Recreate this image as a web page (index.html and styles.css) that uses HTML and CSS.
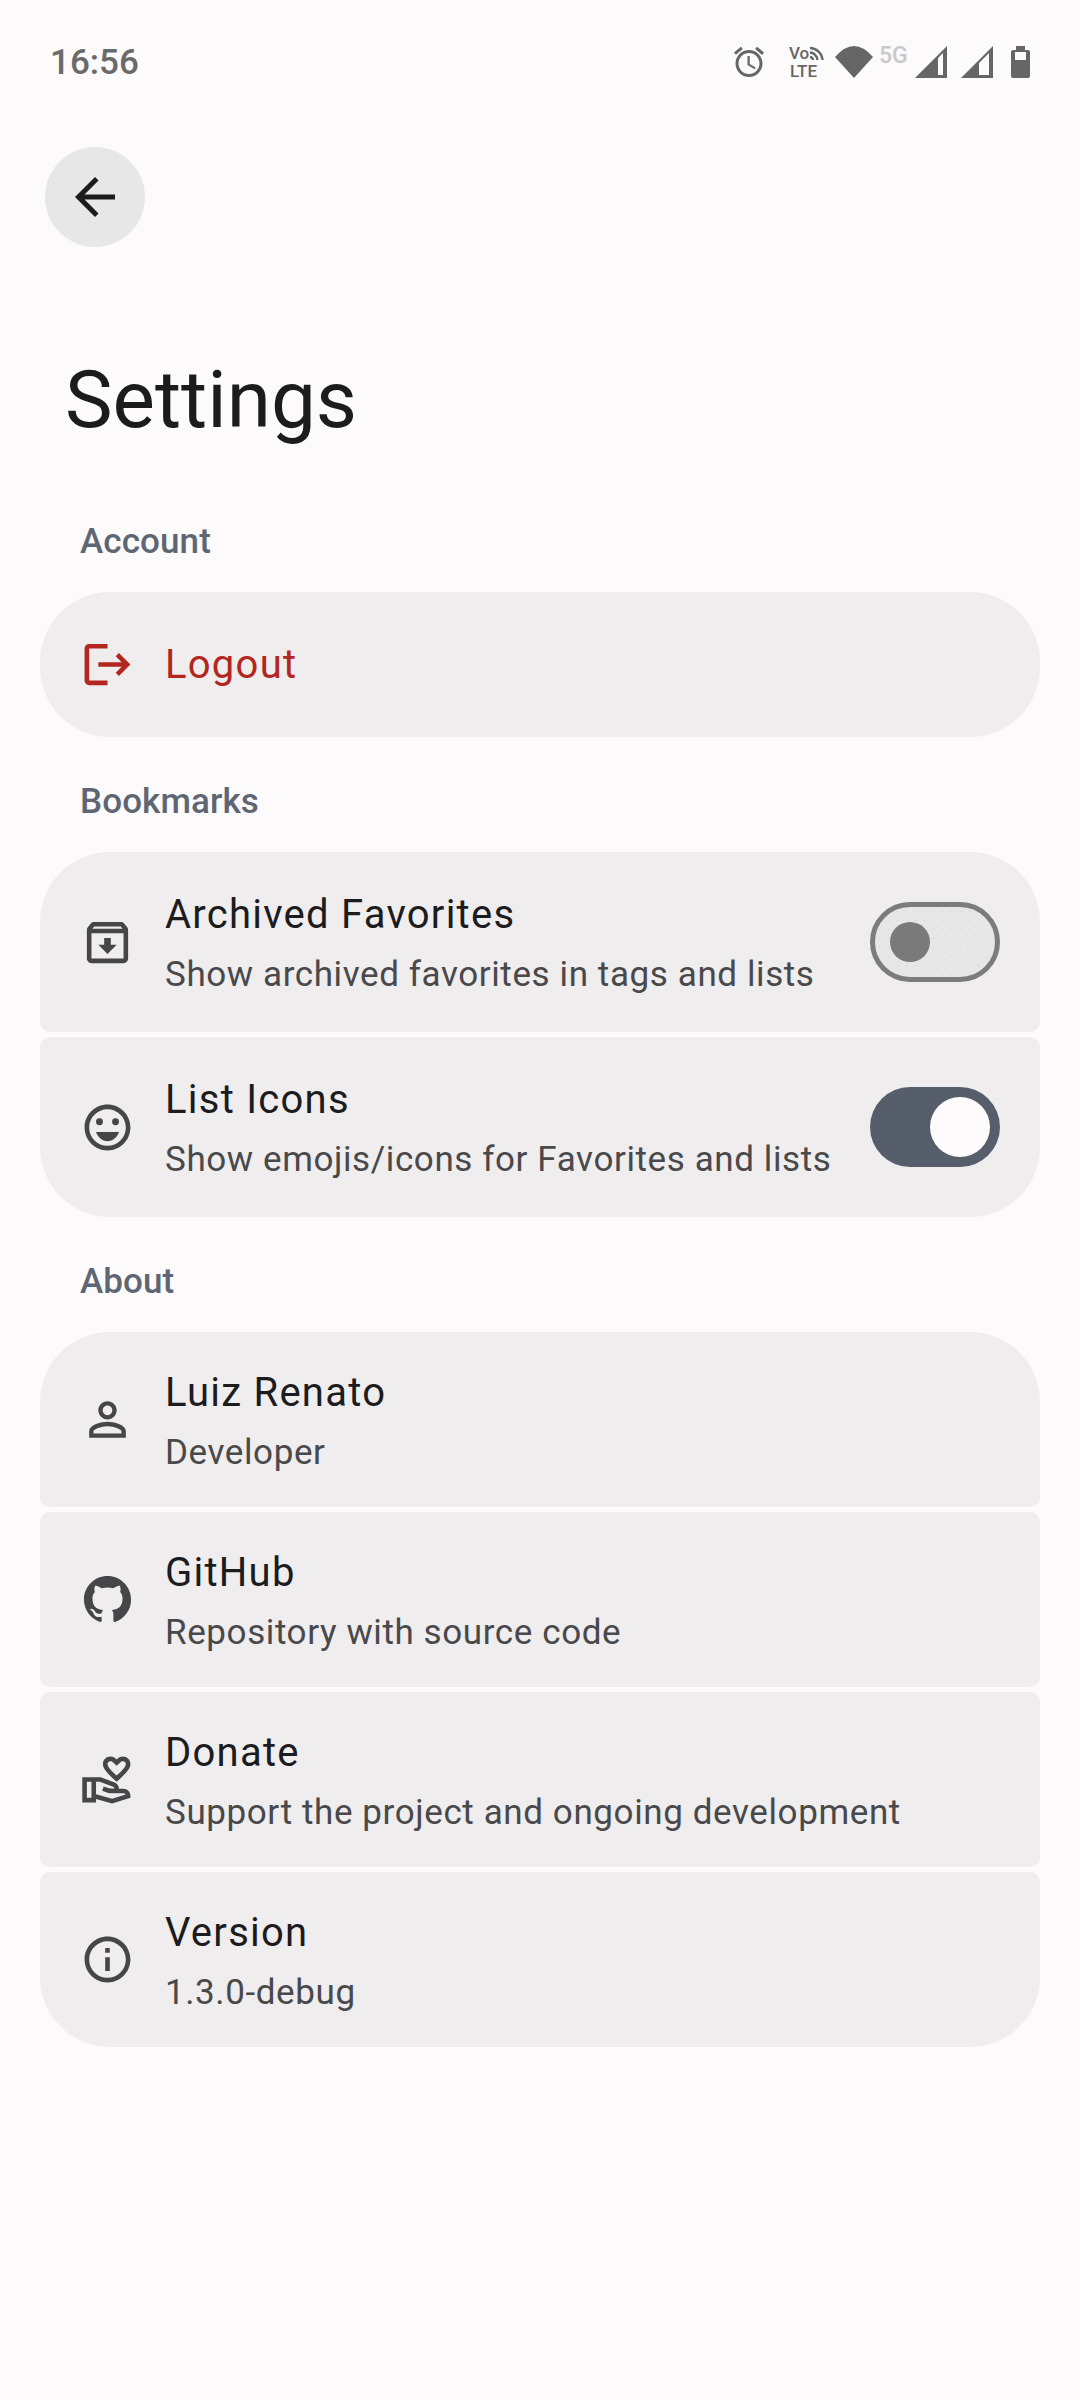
FILE: index.html
```html
<!DOCTYPE html>
<html lang="en">
<head>
  <meta charset="UTF-8">
  <meta name="viewport" content="width=device-width, initial-scale=1.0">
  <title>Settings</title>
  <link rel="stylesheet" href="styles.css">
</head>
<body>
  <header class="status-bar">
    <span class="time">16:56</span>
    <div class="status-icons">
      <svg class="st-alarm" viewBox="0 0 24 24"><path d="M22 5.72l-4.6-3.86-1.29 1.53 4.6 3.86L22 5.72zM7.88 3.39L6.6 1.86 2 5.71l1.29 1.53 4.59-3.85zM12.5 8H11v6l4.75 2.85.75-1.23-4-2.37V8zM12 4c-4.97 0-9 4.03-9 9s4.03 9 9 9 9-4.03 9-9-4.03-9-9-9zm0 16c-3.87 0-7-3.13-7-7s3.13-7 7-7 7 3.13 7 7-3.13 7-7 7z"/></svg>
      <svg class="st-volte" viewBox="0 0 34 32">
        <text x="0" y="13" class="volte-text">Vo</text>
        <text x="1" y="31" class="volte-text">LTE</text>
        <path d="M21 2c6 0 12 5 12.500 12M21 6.500c3.500 0 7 3 7.500 7.500M21 11c1.500 0 3 1.300 3 3" class="volte-arcs"/>
      </svg>
      <svg class="st-wifi" viewBox="0 0 38 32"><path d="M19 32L0 11Q19-11 38 11Z"/></svg>
      <span class="st-5g">5G</span>
      <svg class="st-signal" viewBox="0 0 32 32"><path fill-rule="evenodd" d="M0 32L32 0V32ZM23 29H28V7L23 12Z"/></svg>
      <svg class="st-signal" viewBox="0 0 32 32"><path fill-rule="evenodd" d="M0 32L32 0V32ZM18 29H28V7L18 17Z"/></svg>
      <svg class="st-battery" viewBox="0 0 19 32"><path fill-rule="evenodd" d="M5 0H14V4H17Q19 4 19 6V30Q19 32 17 32H2Q0 32 0 30V6Q0 4 2 4H5ZM4 6H15V14H4Z"/></svg>
    </div>
  </header>

  <button class="back-btn" type="button">
    <svg viewBox="0 0 24 24"><path d="M20 11H7.830l5.590-5.590L12 4l-8 8 8 8 1.410-1.410L7.830 13H20v-2z"/></svg>
  </button>

  <h1 class="page-title">Settings</h1>

  <h2 class="section-label section-first">Account</h2>
  <div class="group">
    <div class="row row-single">
      <svg class="row-icon icon-danger" viewBox="0 0 24 24"><path d="M17 7l-1.410 1.410L18.170 11H8v2h10.170l-2.580 2.580L17 17l5-5zM4 5h8V3H4c-1.100 0-2 .9-2 2v14c0 1.100.9 2 2 2h8v-2H4V5z"/></svg>
      <div class="row-text"><div class="row-title title-danger">Logout</div></div>
    </div>
  </div>

  <h2 class="section-label">Bookmarks</h2>
  <div class="group">
    <div class="row row-switch">
      <svg class="row-icon" viewBox="0 0 24 24"><path d="M20.540 5.230l-1.390-1.680C18.880 3.210 18.470 3 18 3H6c-.47 0-.88.21-1.160.55L3.460 5.230C3.170 5.570 3 6.020 3 6.500V19c0 1.100.9 2 2 2h14c1.100 0 2-.9 2-2V6.500c0-.48-.17-.93-.46-1.270zM6.240 5h11.520l.83 1H5.420l.82-1zM5 19V8h14v11H5zm8.450-9h-2.900v3H8l4 4 4-4h-2.550z"/></svg>
      <div class="row-text">
        <div class="row-title">Archived Favorites</div>
        <div class="row-sub">Show archived favorites in tags and lists</div>
      </div>
      <div class="switch switch-off"><span class="thumb"></span></div>
    </div>
    <div class="row row-switch">
      <svg class="row-icon" viewBox="0 0 24 24"><circle cx="15.500" cy="9.500" r="1.500"/><circle cx="8.500" cy="9.500" r="1.500"/><path d="M12 18c2.280 0 4.220-1.660 5-4H7c.78 2.340 2.720 4 5 4z"/><path d="M12 2C6.470 2 2 6.470 2 12s4.470 10 10 10 10-4.470 10-10S17.530 2 12 2zm0 18c-4.410 0-8-3.590-8-8s3.590-8 8-8 8 3.590 8 8-3.590 8-8 8z"/></svg>
      <div class="row-text">
        <div class="row-title">List Icons</div>
        <div class="row-sub">Show emojis/icons for Favorites and lists</div>
      </div>
      <div class="switch switch-on"><span class="thumb"></span></div>
    </div>
  </div>

  <h2 class="section-label">About</h2>
  <div class="group">
    <div class="row">
      <svg class="row-icon" viewBox="0 0 24 24"><path d="M12 5.900c1.160 0 2.100.94 2.100 2.100s-.94 2.100-2.100 2.100S9.900 9.160 9.900 8s.94-2.100 2.100-2.100m0 9c2.970 0 6.100 1.460 6.100 2.100v1.100H5.900V17c0-.64 3.130-2.100 6.100-2.100M12 4C9.790 4 8 5.790 8 8s1.790 4 4 4 4-1.790 4-4-1.790-4-4-4zm0 9c-2.670 0-8 1.340-8 4v3h16v-3c0-2.660-5.330-4-8-4z"/></svg>
      <div class="row-text">
        <div class="row-title">Luiz Renato</div>
        <div class="row-sub">Developer</div>
      </div>
    </div>
    <div class="row">
      <svg class="row-icon" viewBox="-2 -2 28 28"><path d="M12 0C5.370 0 0 5.370 0 12c0 5.300 3.440 9.800 8.200 11.400.6.100.82-.26.82-.58v-2c-3.340.72-4.040-1.600-4.040-1.600-.55-1.400-1.340-1.770-1.340-1.770-1.080-.74.08-.72.08-.72 1.200.08 1.840 1.230 1.840 1.230 1.070 1.830 2.800 1.300 3.490 1 .1-.78.42-1.300.76-1.600-2.670-.3-5.470-1.330-5.470-5.930 0-1.310.47-2.380 1.240-3.220-.13-.3-.54-1.520.12-3.180 0 0 1-.32 3.300 1.230a11.500 11.500 0 0 1 6 0c2.290-1.550 3.300-1.230 3.300-1.230.66 1.660.25 2.880.12 3.180.77.84 1.240 1.910 1.240 3.220 0 4.610-2.800 5.620-5.480 5.920.43.37.82 1.100.82 2.220v3.290c0 .32.22.7.83.58A12 12 0 0 0 24 12c0-6.630-5.370-12-12-12z"/></svg>
      <div class="row-text">
        <div class="row-title">GitHub</div>
        <div class="row-sub">Repository with source code</div>
      </div>
    </div>
    <div class="row">
      <svg class="row-icon" viewBox="0 0 24 24"><path d="M16 13c3.090-2.810 6-5.440 6-7.700C22 3.450 20.550 2 18.700 2c-1.040 0-2.050.49-2.700 1.250C15.340 2.490 14.340 2 13.300 2 11.450 2 10 3.450 10 5.300c0 2.260 2.910 4.890 6 7.700zm-2.700-9c.44 0 .89.21 1.180.55L16 5.970l1.520-1.420c.29-.34.74-.55 1.180-.55.74 0 1.300.56 1.300 1.300 0 1.120-2.040 3.170-4 4.990-1.960-1.820-4-3.870-4-4.990 0-.74.56-1.300 1.300-1.300zM19 16h-2c0-1.200-.75-2.280-1.870-2.700L8.970 11H1v11h6v-1.440l7 1.940 8-2.500v-1c0-1.660-1.340-3-3-3zM3 20v-7h2v7H3zm10.970.41L7 18.480V13h1.610l5.820 2.170c.34.13.57.46.57.83 0 0-1.990-.05-2.300-.15l-2.380-.79-.63 1.900 2.380.79c.51.17 1.040.26 1.580.26H19c.39 0 .74.23.9.56l-5.930 1.850z"/></svg>
      <div class="row-text">
        <div class="row-title">Donate</div>
        <div class="row-sub">Support the project and ongoing development</div>
      </div>
    </div>
    <div class="row">
      <svg class="row-icon" viewBox="0 0 24 24"><path d="M11 7h2v2h-2zm0 4h2v6h-2zm1-9C6.480 2 2 6.480 2 12s4.480 10 10 10 10-4.480 10-10S17.520 2 12 2zm0 18c-4.410 0-8-3.590-8-8s3.590-8 8-8 8 3.590 8 8-3.590 8-8 8z"/></svg>
      <div class="row-text">
        <div class="row-title">Version</div>
        <div class="row-sub">1.3.0-debug</div>
      </div>
    </div>
  </div>
</body>
</html>
```

FILE: styles.css
```css
body {
  font-family: Roboto, sans-serif;
  margin: 0;
  padding: 0;
  background-color: #fcfafb;
  min-height: 2400px;
}
.status-bar {
  height: 124px;
  display: flex;
  justify-content: space-between;
  align-items: center;
  padding: 0 50px;
  box-sizing: border-box;
}
.time {
  font-size: 35px;
  font-weight: 500;
  color: #6a6a6a;
}
.status-icons {
  display: flex;
  align-items: center;
  fill: #666;
}
.st-alarm {
  width: 36px;
  height: 36px;
  margin-right: 22px;
}
.st-volte {
  width: 34px;
  height: 32px;
  margin-right: 12px;
  overflow: visible;
}
.volte-text {
  font-size: 17px;
  font-weight: 500;
  fill: #666;
}
.volte-arcs {
  fill: none;
  stroke: #666;
  stroke-width: 2.4;
}
.st-wifi {
  width: 38px;
  height: 32px;
  margin-right: 6px;
}
.st-5g {
  width: 30px;
  margin-right: 6px;
  font-size: 23px;
  line-height: 24px;
  font-weight: 500;
  color: #c9c9c9;
  align-self: flex-start;
}
.st-signal {
  width: 32px;
  height: 32px;
  margin-right: 14px;
}
.st-battery {
  width: 19px;
  height: 32px;
  margin-left: 4px;
}
.back-btn {
  display: flex;
  align-items: center;
  justify-content: center;
  width: 100px;
  height: 100px;
  margin: 23px 0 0 45px;
  padding: 0;
  border: none;
  border-radius: 50%;
  background-color: #e8e7e8;
}
.back-btn svg {
  width: 60px;
  height: 60px;
  fill: #1c1b1d;
}
.page-title {
  margin: 102.5px 0 0 65px;
  font-size: 80px;
  line-height: 100px;
  font-weight: 400;
  color: #1c1b1d;
}
.section-label {
  margin: 40px 0 25px 80px;
  font-size: 35px;
  line-height: 50px;
  font-weight: 500;
  letter-spacing: 0.1px;
  color: #5f6673;
}
.section-first {
  margin-top: 67.5px;
}
.group {
  display: flex;
  flex-direction: column;
  gap: 5px;
  margin: 0 40px;
}
.row {
  display: flex;
  align-items: center;
  background-color: #efedee;
  border-radius: 10px;
  padding: 27.5px 65px 27.5px 37px;
}
.row:first-child {
  border-top-left-radius: 70px;
  border-top-right-radius: 70px;
}
.row:last-child {
  border-bottom-left-radius: 70px;
  border-bottom-right-radius: 70px;
}
.row-single {
  padding-top: 0;
  padding-bottom: 0;
  height: 145px;
}
.row-switch {
  padding-top: 30px;
  padding-bottom: 30px;
  padding-right: 40px;
}
.row-icon {
  flex: none;
  width: 55px;
  height: 55px;
  margin: 0 30px 0 3px;
  fill: #464547;
}
.icon-danger {
  fill: #b3261e;
}
.row-text {
  flex: 1;
  margin: 3px 0 -3px;
}
.row-single .row-text {
  margin: 0;
}
.row-title {
  font-size: 40px;
  line-height: 60px;
  letter-spacing: 1.25px;
  color: #1c1b1d;
}
.title-danger {
  color: #b3261e;
}
.row-sub {
  font-size: 35px;
  line-height: 60px;
  letter-spacing: 0.6px;
  color: #49484a;
}
.switch {
  flex: none;
  box-sizing: border-box;
  display: flex;
  align-items: center;
  width: 130px;
  height: 80px;
  border-radius: 40px;
}
.switch-off {
  padding-left: 15px;
  border: 5px solid #7c7c7c;
  background-color: #e8e7e8;
  background-image: radial-gradient(#dcdcdc 0.8px, transparent 1.2px);
  background-size: 9px 9px;
}
.switch-off .thumb {
  width: 40px;
  height: 40px;
  border-radius: 50%;
  background-color: #7a7a7a;
}
.switch-on {
  justify-content: flex-end;
  padding-right: 10px;
  background-color: #565e6c;
}
.switch-on .thumb {
  width: 60px;
  height: 60px;
  border-radius: 50%;
  background-color: #fdfbfc;
}
```
